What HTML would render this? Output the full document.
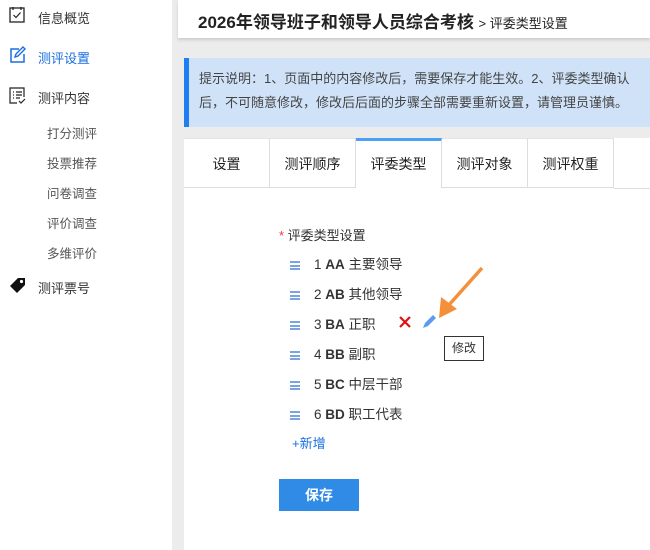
<!DOCTYPE html>
<html><head><meta charset="utf-8"><style>
*{margin:0;padding:0;box-sizing:border-box}
body{width:650px;height:550px;overflow:hidden;background:#ececec;font-family:"Liberation Sans","Noto Sans CJK SC",sans-serif;font-size:13px;color:#333;position:relative}
.side{position:absolute;left:0;top:0;width:172px;height:550px;background:#fff}
.si{position:absolute;left:38px;font-size:13px;color:#333}
.ic{position:absolute;left:9px}
.sub{position:absolute;left:47px;font-size:12.5px;color:#555}
.hdr{position:absolute;left:178px;top:0;width:472px;height:38px;background:#fff;box-shadow:0 2px 3px #ccc}
.hdr b{position:absolute;left:20px;top:8px;font-size:17px;color:#222}
.hdr span{font-size:13px;font-weight:normal}
.info{position:absolute;left:184px;top:58px;width:466px;height:69px;background:#cfe2f8;border-left:5px solid #1f7ff0;padding:9px 0 0 10px;font-size:13px;line-height:24px;color:#444}
.panel{position:absolute;left:184px;top:138px;width:466px;height:412px;background:#fff}
.tab{position:absolute;top:0;width:86px;height:50px;border-right:1px solid #ddd;border-bottom:1px solid #ddd;text-align:center;line-height:50px;font-size:14px;color:#222;border-top:1px solid #e3e3e3}
.tab.a{border-top:3px solid #4aa0f5;border-bottom:none;line-height:46px}
.row{position:absolute;left:106px;font-size:13.5px;color:#333}
.row i{display:inline-block;width:10px;height:9px;border-top:2px solid #7aa5e0;border-bottom:2px solid #7aa5e0;position:relative;margin-right:14px;vertical-align:-1px}
.row i:after{content:"";position:absolute;left:0;right:0;top:1.5px;height:2px;background:#7aa5e0}
.row b{font-weight:bold}
</style></head><body>
<div class="side">
<svg class="ic" style="top:6px" width="16" height="17"><rect x="1" y="2" width="14" height="14" fill="none" stroke="#222" stroke-width="1.3"/><path d="M4 1v3M12 1v3" stroke="#222" stroke-width="1.3"/><path d="M4.5 9l2.5 2.5 4.5-5" fill="none" stroke="#222" stroke-width="1.2"/></svg>
<div class="si" style="top:8px">信息概览</div>
<svg class="ic" style="top:46px" width="17" height="17"><path d="M10 3H2v13h13V8" fill="none" stroke="#1a6fe0" stroke-width="1.5"/><path d="M6 11l1-3 7-7 2 2-7 7z" fill="none" stroke="#1a6fe0" stroke-width="1.4"/></svg>
<div class="si" style="top:48px;color:#1a6fe0">测评设置</div>
<svg class="ic" style="top:87px" width="17" height="17"><path d="M15 10V1H1v15h7" fill="none" stroke="#222" stroke-width="1.2"/><path d="M4 5h1M7 5h6M4 8h1M7 8h6M4 11h1M7 11h4M10 14l2 2 4-4" fill="none" stroke="#222" stroke-width="1.2"/></svg>
<div class="si" style="top:88px">测评内容</div>
<div class="sub" style="top:123px">打分测评</div>
<div class="sub" style="top:153px">投票推荐</div>
<div class="sub" style="top:183px">问卷调查</div>
<div class="sub" style="top:213px">评价调查</div>
<div class="sub" style="top:243px">多维评价</div>
<svg class="ic" style="top:277px" width="18" height="17"><path d="M1 9L9 1h7v7l-8 8z" fill="#111"/><circle cx="12.5" cy="4.5" r="1.6" fill="#fff"/></svg>
<div class="si" style="top:278px">测评票号</div>
</div>
<div class="hdr"><b>2026年领导班子和领导人员综合考核 <span>&gt; 评委类型设置</span></b></div>
<div class="info">提示说明：1、页面中的内容修改后，需要保存才能生效。2、评委类型确认后，不可随意修改，修改后后面的步骤全部需要重新设置，请管理员谨慎。</div>
<div class="panel">
<div class="tab" style="left:0">设置</div>
<div class="tab" style="left:86px">测评顺序</div>
<div class="tab a" style="left:172px">评委类型</div>
<div class="tab" style="left:258px">测评对象</div>
<div class="tab" style="left:344px">测评权重</div>
<div style="position:absolute;left:430px;top:50px;width:36px;border-bottom:1px solid #ddd"></div>
<div class="row" style="left:95px;top:87px;font-size:13px"><span style="color:#f33">*</span> 评委类型设置</div>
<div class="row" style="top:115px"><i></i>1 <b>AA</b> 主要领导</div>
<div class="row" style="top:145px"><i></i>2 <b>AB</b> 其他领导</div>
<div class="row" style="top:175px"><i></i>3 <b>BA</b> 正职</div>
<div class="row" style="top:205px"><i></i>4 <b>BB</b> 副职</div>
<div class="row" style="top:235px"><i></i>5 <b>BC</b> 中层干部</div>
<div class="row" style="top:265px"><i></i>6 <b>BD</b> 职工代表</div>
<div class="row" style="left:108px;top:295px;color:#1a6fe0;font-size:13px">+新增</div>
<svg style="position:absolute;left:214px;top:177px" width="14" height="14"><path d="M2 2l10 10M12 2L2 12" stroke="#e01010" stroke-width="2.2"/></svg>
<svg style="position:absolute;left:236px;top:128px" width="66" height="66"><path d="M62 2L28 40" stroke="#f5903a" stroke-width="3.5"/><path d="M19 52l2-21 16 12z" fill="#f5903a"/><path d="M3 62l2-5 8-8 3 3-8 8z" fill="#5b9cef"/></svg>
<div style="position:absolute;left:260px;top:198px;width:40px;height:25px;border:1px solid #333;background:#fff;font-size:12px;text-align:center;line-height:23px">修改</div>
<div style="position:absolute;left:95px;top:341px;width:80px;height:32px;background:#2f8be6;color:#fff;font-weight:bold;font-size:14px;text-align:center;line-height:32px">保存</div>
</div>
</body></html>
